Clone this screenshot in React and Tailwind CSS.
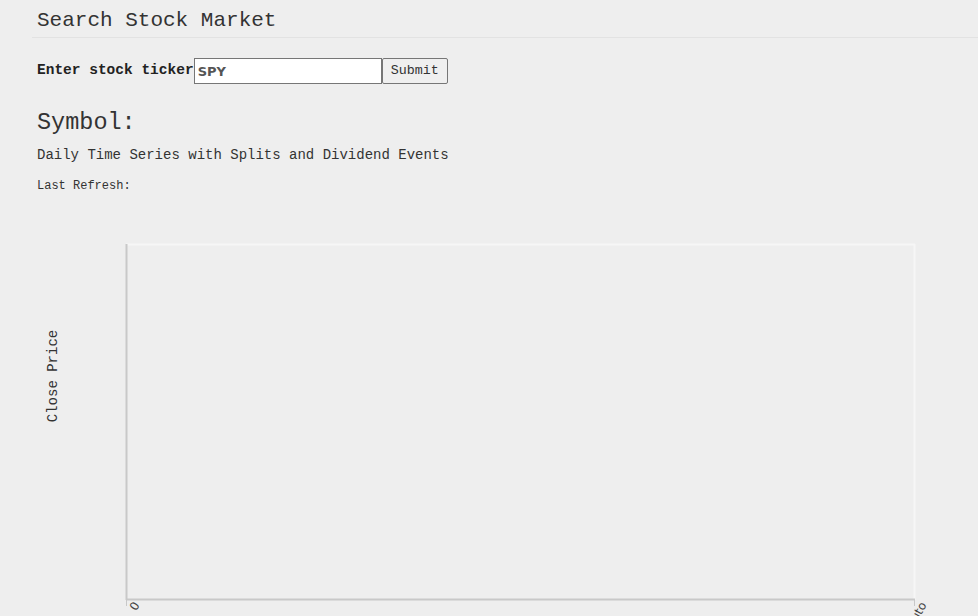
export default function App() {
  return (
    <div className="min-h-screen bg-[#eeeeee] text-[#333] font-['Liberation_Mono',monospace] overflow-hidden">
      <div className="ml-[32px] border-b border-[#e2e2e2] pl-[5px] pt-[8px] h-[38px]">
        <h1 className="text-[21px] leading-[26px] text-[#333]">Search Stock Market</h1>
      </div>

      <form className="ml-[37px] mt-[20px] flex items-center" onSubmit={(e) => e.preventDefault()}>
        <label className="text-[14.5px] font-bold text-[#222]">Enter stock ticker</label>
        <input
          type="text"
          defaultValue="SPY"
          className="w-[188px] h-[26px] bg-white border border-[#767676] px-[3px] text-[13px] font-bold text-[#555] font-['DejaVu_Sans',sans-serif] outline-none"
        />
        <button
          type="submit"
          className="h-[26px] px-[8px] bg-[#efefef] border border-[#767676] rounded-[2px] text-[13.33px] text-[#333]"
        >
          Submit
        </button>
      </form>

      <div className="ml-[37px] mt-[24px] text-[23.5px] leading-[30px] text-[#333]">Symbol:</div>
      <div className="ml-[37px] mt-[8px] text-[14px] leading-[18px] text-[#333]">
        Daily Time Series with Splits and Dividend Events
      </div>
      <div className="ml-[37px] mt-[14px] text-[12px] leading-[16px] text-[#333]">Last Refresh:</div>

      <svg width="978" height="416" viewBox="0 200 978 416" className="block mt-[6px]">
        <rect x="126" y="244" width="790" height="356" fill="#eeeeee" />
        <line x1="126" y1="244.5" x2="915" y2="244.5" stroke="#f6f6f6" strokeWidth="2" />
        <line x1="914.5" y1="244" x2="914.5" y2="600" stroke="#f6f6f6" strokeWidth="2" />
        <line x1="126.5" y1="244" x2="126.5" y2="600" stroke="#c8c8c8" strokeWidth="2" />
        <line x1="126" y1="599.5" x2="915" y2="599.5" stroke="#c8c8c8" strokeWidth="2" />
        <line x1="126.5" y1="600" x2="126.5" y2="606" stroke="#c8c8c8" strokeWidth="1" />
        <line x1="914.5" y1="600" x2="914.5" y2="606" stroke="#c8c8c8" strokeWidth="1" />
        <text
          x="0"
          y="0"
          transform="translate(57 376) rotate(-90)"
          textAnchor="middle"
          fontFamily="Liberation Mono, monospace"
          fontSize="14"
          fill="#333"
        >
          Close Price
        </text>
        <text
          x="0"
          y="0"
          transform="translate(140 605) rotate(-60)"
          textAnchor="end"
          fontFamily="DejaVu Sans, sans-serif"
          fontSize="12"
          fill="#444"
        >
          0
        </text>
        <text
          x="0"
          y="0"
          transform="translate(927 605) rotate(-60)"
          textAnchor="end"
          fontFamily="DejaVu Sans, sans-serif"
          fontSize="12"
          fill="#444"
        >
          Invalid Date auto
        </text>
      </svg>
    </div>
  );
}
